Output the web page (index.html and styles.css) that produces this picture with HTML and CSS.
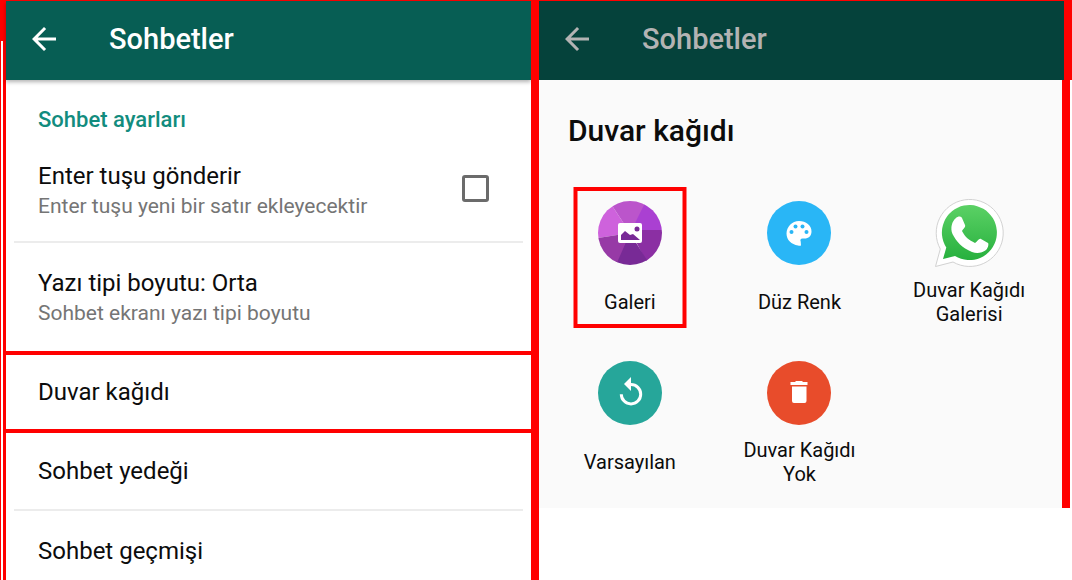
FILE: index.html
```html
<!DOCTYPE html>
<html lang="tr">
<head>
    <meta charset="UTF-8">
    <meta name="viewport" content="width=device-width, initial-scale=1.0">
    <title>Sohbetler</title>
    <link rel="stylesheet" href="styles.css">
</head>
<body>
    <div class="screens">
        <div class="rail">
            <div class="rail-top"></div>
            <div class="rail-body"></div>
        </div>

        <!-- Chat settings -->
        <main class="settings">
            <header class="appbar">
                <button class="back" aria-label="Geri">
                    <svg viewBox="0 0 24 24"><path d="M20 11H7.830l5.590-5.590L12 4l-8 8 8 8 1.410-1.410L7.830 13H20z"/></svg>
                </button>
                <h1>Sohbetler</h1>
            </header>
            <h2 class="section-title">Sohbet ayarları</h2>
            <div class="row tall">
                <label for="enterSend">
                    <span class="title">Enter tuşu gönderir</span>
                    <span class="summary">Enter tuşu yeni bir satır ekleyecektir</span>
                </label>
                <input type="checkbox" id="enterSend">
            </div>
            <hr>
            <button class="row font-row">
                <span class="title">Yazı tipi boyutu: Orta</span>
                <span class="summary">Sohbet ekranı yazı tipi boyutu</span>
            </button>
            <button class="row marked"><span class="title">Duvar kağıdı</span></button>
            <button class="row"><span class="title">Sohbet yedeği</span></button>
            <hr>
            <button class="row last"><span class="title">Sohbet geçmişi</span></button>
        </main>

        <div class="divider"></div>

        <!-- Wallpaper picker -->
        <section class="picker">
            <header class="appbar dimmed">
                <button class="back" aria-label="Geri">
                    <svg viewBox="0 0 24 24"><path d="M20 11H7.830l5.590-5.590L12 4l-8 8 8 8 1.410-1.410L7.830 13H20z"/></svg>
                </button>
                <h1>Sohbetler</h1>
            </header>
            <div class="sheet">
                <h2>Duvar kağıdı</h2>
                <div class="tiles">
                    <button class="tile selected">
                        <svg class="icon" viewBox="0 0 64 64">
                            <defs><clipPath id="disc"><circle cx="32" cy="32" r="32"/></clipPath></defs>
                            <g clip-path="url(#disc)">
                                <path fill="#ce62dc" d="M32 32L0 37V0h11z"/>
                                <path fill="#bb55cb" d="M32 32L11 0h39z"/>
                                <path fill="#aa40d2" d="M32 32L48 0h16v29H34z"/>
                                <path fill="#8b2fa3" d="M32 29h32v35H50z"/>
                                <path fill="#782a96" d="M32 32l20 32H16z"/>
                                <path fill="#973aa6" d="M32 32L18 64H0V37z"/>
                            </g>
                            <rect x="20" y="22" width="24" height="20" rx="2" fill="#fff"/>
                            <path fill="#782a96" d="M23 39v-5l4-4 5 4 3-1 7 6z"/>
                            <circle cx="39" cy="28" r="2.5" fill="#782a96"/>
                        </svg>
                        <span class="name">Galeri</span>
                    </button>
                    <button class="tile">
                        <svg class="icon" viewBox="0 0 64 64">
                            <circle cx="32" cy="32" r="32" fill="#29b6f6"/>
                            <path fill="#fff" d="M34 44.500c-1 .4-2 .3-3-.1C24.500 43.500 19.500 39 19.500 32.500S25 20 32 20s12.500 4.500 12.500 10.500c0 4.500-3 7-7 7h-2c-2 0-2.500 1.500-1.800 3z"/>
                            <g fill="#29b6f6">
                                <circle cx="24.500" cy="31" r="2"/><circle cx="28.500" cy="25.500" r="2"/>
                                <circle cx="35.500" cy="25.500" r="2"/><circle cx="39.500" cy="31" r="2"/>
                            </g>
                        </svg>
                        <span class="name">Düz Renk</span>
                    </button>
                    <button class="tile">
                        <svg class="icon logo" viewBox="0 0 70 70">
                            <defs>
                                <linearGradient id="green" x1="0" y1="0" x2="0" y2="1">
                                    <stop offset="0" stop-color="#5bd165"/>
                                    <stop offset="1" stop-color="#27b03e"/>
                                </linearGradient>
                            </defs>
                            <path fill="#fff" stroke="#d2d2d2" d="M1.500 68.500L6.300 51A33.500 33.500 0 1 1 19 64z"/>
                            <path fill="url(#green)" d="M9 61L12.300 49.500A27.500 27.500 0 1 1 21 58z"/>
                            <path fill="#fff" d="M22 20c2-2 5-2 6 0l3 7c1 2-2 4-3 6 3 6 7 9 13 12 2-1 4-5 6-4l7 4c1 1 0 5-2 7-4 3-9 4-14 2C28 50 22 43 18.500 36 16 30 18 23 22 20z"/>
                        </svg>
                        <span class="name">Duvar Kağıdı Galerisi</span>
                    </button>
                    <button class="tile">
                        <svg class="icon" viewBox="0 0 64 64">
                            <circle cx="32" cy="32" r="32" fill="#26a69a"/>
                            <path fill="none" stroke="#fff" stroke-width="3" d="M31 23.500h2a9.700 9.700 0 1 1-9.700 9.700"/>
                            <path fill="#fff" d="M33 16v14l-7-7z"/>
                        </svg>
                        <span class="name">Varsayılan</span>
                    </button>
                    <button class="tile">
                        <svg class="icon" viewBox="0 0 64 64">
                            <circle cx="32" cy="32" r="32" fill="#e84c2b"/>
                            <path fill="#fff" d="M23.500 21h4.500l1-1h6l1 1h4.500v3h-17zM25 25.500h14.500V40q0 2-2 2H27q-2 0-2-2z"/>
                        </svg>
                        <span class="name">Duvar Kağıdı Yok</span>
                    </button>
                </div>
            </div>
        </section>
    </div>
</body>
</html>
```
FILE: styles.css
```css
*, *::after {
    box-sizing: border-box;
}
body {
    margin: 0;
    font-family: Roboto, sans-serif;
    background-color: #fff;
    color: #0c0c0c;
}
h1, h2 {
    margin: 0;
    font-weight: 500;
}
button {
    border: none;
    padding: 0;
    background: none;
    color: inherit;
    font-family: inherit;
    cursor: pointer;
}
.screens {
    display: grid;
    grid-template-columns: 6px minmax(0, 1fr) 8px minmax(0, 1fr) 8px;
    min-height: 100vh;
    border-top: 1px solid #f00;
}

/* Red frame */
.rail {
    display: flex;
    flex-direction: column;
}
.rail-top {
    height: 40px;
    background-color: #f00;
}
.rail-body {
    flex: 1;
    border-left: 1px solid #f00;
    border-right: 3px solid #f00;
}
.divider {
    background-color: #f00;
}

/* App bar */
.appbar {
    display: flex;
    align-items: center;
    height: 79px;
    padding: 0 0 3px 20px;
    background-color: #075e54;
    color: #fff;
    box-shadow: 0 2px 4px rgba(0, 0, 0, 0.3);
}
.appbar h1 {
    margin-left: 47px;
    font-size: 29px;
    line-height: 36px;
}
.back {
    display: flex;
}
.back svg {
    width: 36px;
    height: 36px;
    fill: currentColor;
}
.dimmed {
    background-color: #05423b;
    color: #b3b3b3;
    box-shadow: none;
}

/* Settings list */
.section-title {
    padding: 24px 32px 12px;
    color: #128c7e;
    font-size: 22px;
    line-height: 32px;
}
.row {
    display: flex;
    align-items: center;
    width: 100%;
    padding: 22px 32px;
    text-align: left;
}
.tall {
    padding: 12px 32px 21px;
}
.font-row {
    flex-direction: column;
    align-items: flex-start;
    padding: 24px 32px;
}
.row label {
    flex: 1;
}
.title, .summary {
    display: block;
}
.title {
    font-size: 24px;
    line-height: 32px;
}
.summary {
    color: #757575;
    font-size: 21px;
    line-height: 28px;
}
.row input {
    appearance: none;
    width: 27px;
    height: 27px;
    margin: 0 10px 4px 0;
    border: 3px solid #6b6b6b;
    border-radius: 3px;
}
.marked {
    padding: 21px 32px;
    border: solid #f00;
    border-width: 4px 0;
}
.last {
    padding: 24px 32px 8px;
}
hr {
    height: 2px;
    margin: 0 8px;
    border: none;
    background-color: #ececec;
}

/* Wallpaper picker */
.picker {
    grid-column: 4 / 6;
}
.picker .appbar {
    border-right: 8px solid #f00;
}
.sheet {
    height: 428px;
    margin-right: 2px;
    border-right: 8px solid #f00;
    background-color: #fafafa;
}
.sheet h2 {
    padding: 33px 29px 0;
    font-size: 30px;
    line-height: 36px;
}
.tiles {
    display: grid;
    grid-template-columns: repeat(3, minmax(0, 1fr));
    grid-auto-rows: 160px;
    padding: 47px 8px 0 6px;
}
.tile {
    position: relative;
    display: flex;
    flex-direction: column;
    align-items: center;
    padding-top: 5px;
}
.icon {
    flex: none;
    width: 64px;
    height: 64px;
}
.logo {
    width: 70px;
    height: 70px;
    margin: -3px 0;
}
.name {
    display: flex;
    align-items: center;
    justify-content: center;
    width: 120px;
    height: 48px;
    margin-top: 13px;
    font-size: 20px;
    line-height: 24px;
}
.selected::after {
    content: "";
    position: absolute;
    top: -9px;
    left: 50%;
    width: 113px;
    height: 141px;
    border: 4px solid #f00;
    transform: translateX(-50%);
}
```
